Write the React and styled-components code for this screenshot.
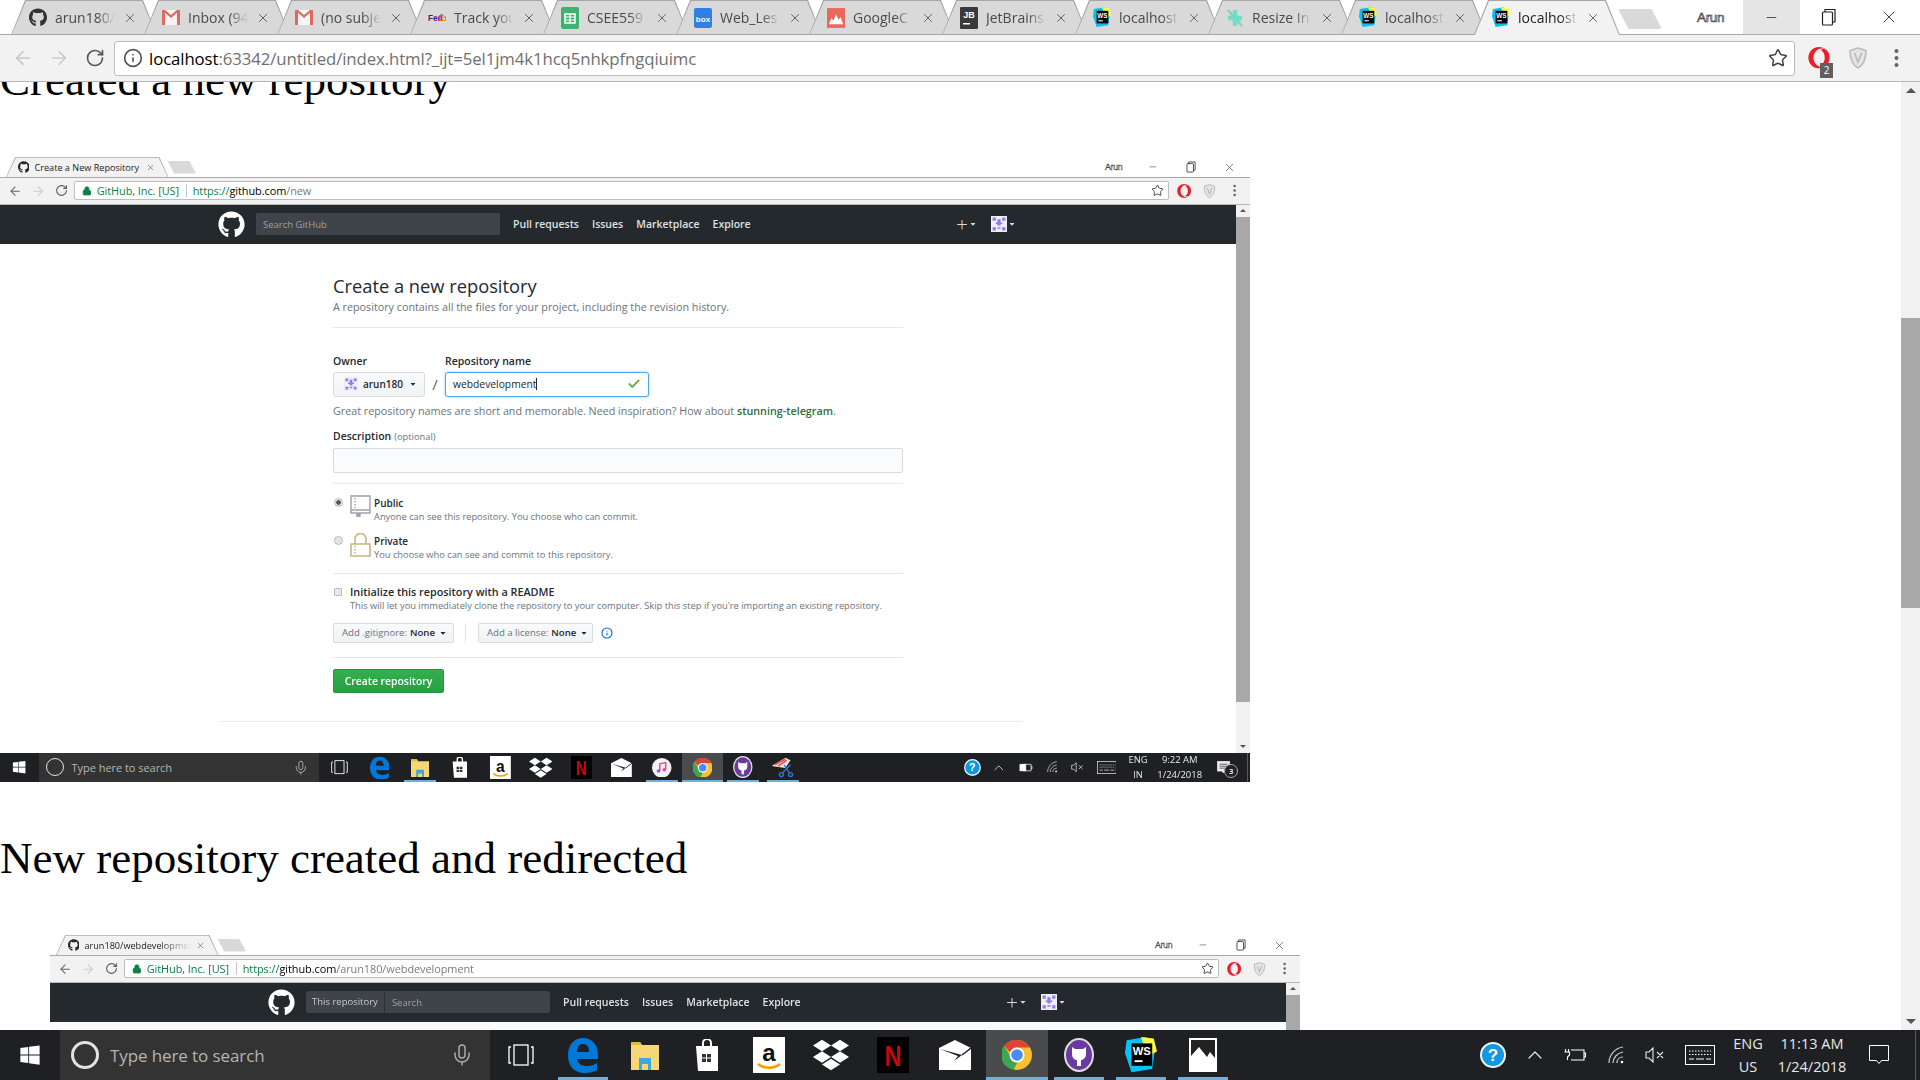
import React from 'react';
import styled, { createGlobalStyle } from 'styled-components';
import { ArrowLeft, ArrowRight, RotateCw, Star, Info, Check, X, Minus, ChevronUp, Mic, Lock } from 'lucide-react';
import { FaGithub, FaOpera, FaDropbox, FaWindows, FaCaretDown } from 'react-icons/fa';

const GlobalStyle = createGlobalStyle`
  html, body { margin: 0; padding: 0; background: #fff; overflow: hidden; }
  * { box-sizing: border-box; }
`;

const UI_FONT = `'Open Sans', 'Noto Sans', sans-serif`;

const Screen = styled.div`
  width: 1920px;
  height: 1080px;
  display: flex;
  flex-direction: column;
  overflow: hidden;
  font-family: ${UI_FONT};
`;

/* ---------- browser bar ---------- */

const BarWrap = styled.div`
  flex: none;
  zoom: ${(p) => p.$scale};
`;
const TabStrip = styled.div`
  height: ${(p) => p.$height}px;
  display: flex;
  align-items: flex-end;
  padding-left: ${(p) => p.$left}px;
  background: #fff;
  border-bottom: 1px solid #a9a9a9;
  position: relative;
`;
const TabBox = styled.div`
  position: relative;
  flex: none;
  width: ${(p) => p.$width}px;
  height: ${(p) => p.$height}px;
  margin-right: -13px;
  margin-bottom: -1px;
  padding: 0 20px 0 18px;
  display: flex;
  align-items: center;
  gap: 8px;
  z-index: ${(p) => (p.$active ? 3 : 1)};
  &::before {
    content: '';
    position: absolute;
    inset: 0;
    background: #a6a6a6;
    clip-path: polygon(0 100%, 14px 0, calc(100% - 14px) 0, 100% 100%);
  }
  &::after {
    content: '';
    position: absolute;
    inset: 1px 1px ${(p) => (p.$active ? 0 : 1)}px 1px;
    background: ${(p) => (p.$active ? '#f2f2f2' : '#d9d9d9')};
    clip-path: polygon(0 100%, 14px 0, calc(100% - 14px) 0, 100% 100%);
  }
  & > * {
    position: relative;
    z-index: 1;
  }
`;
const FavSlot = styled.span`
  flex: none;
  width: 18px;
  height: 18px;
  display: flex;
  align-items: center;
  justify-content: center;
`;
const TabTitle = styled.span`
  flex: 1;
  min-width: 0;
  overflow: hidden;
  white-space: nowrap;
  font-size: 14px;
  color: ${(p) => (p.$active ? '#222' : '#4a4a4a')};
  -webkit-mask-image: ${(p) => (p.$fade ? 'linear-gradient(90deg, #000 70%, transparent 100%)' : 'none')};
  mask-image: ${(p) => (p.$fade ? 'linear-gradient(90deg, #000 70%, transparent 100%)' : 'none')};
`;
const TabClose = styled(X)`
  flex: none;
  color: #5a5a5a;
`;
const NewTab = styled.div`
  flex: none;
  width: 44px;
  height: 20px;
  margin: 0 0 5px 11px;
  background: #d9d9d9;
  clip-path: polygon(0 0, 76% 0, 100% 100%, 24% 100%);
  border-radius: 3px;
`;
const WindowControls = styled.div`
  margin-left: auto;
  align-self: flex-start;
  height: ${(p) => p.$height}px;
  display: flex;
  align-items: center;
`;
const ProfileName = styled.span`
  font-family: 'Liberation Sans', sans-serif;
  font-size: 13.5px;
  letter-spacing: -0.4px;
  color: #fff;
  -webkit-text-stroke: 0.7px #444;
  margin-right: 19px;
`;
const WinButton = styled.div`
  width: ${(p) => p.$width}px;
  height: 100%;
  display: flex;
  align-items: center;
  justify-content: center;
  color: #222;
  background: ${(p) => (p.$hover ? '#e5e5e5' : 'transparent')};
`;
const Toolbar = styled.div`
  height: ${(p) => p.$height}px;
  display: flex;
  align-items: center;
  padding: 0 4px 0 5px;
  background: #f2f2f2;
  border-bottom: 1px solid #b7b7b7;
`;
const NavButton = styled.div`
  flex: none;
  width: 36px;
  display: flex;
  justify-content: center;
  color: ${(p) => p.$color};
`;
const AddressBar = styled.div`
  flex: 1;
  height: ${(p) => p.$height}px;
  margin-left: 1px;
  margin-right: 4px;
  padding: 0 6px 0 8px;
  display: flex;
  align-items: center;
  background: #fff;
  border: 1px solid #bcbcbc;
  border-radius: 3px;
  font-size: 16.8px;
  white-space: nowrap;
`;
const UrlPart = styled.span`
  color: ${(p) => p.$color};
  letter-spacing: -0.1px;
`;
const SecureName = styled.span`
  color: #0b8043;
  margin-left: 7px;
  letter-spacing: -0.1px;
`;
const UrlDivider = styled.span`
  width: 1px;
  height: 20px;
  background: #c5c5c5;
  margin: 0 10px;
`;
const LockGap = styled.span`
  display: flex;
  flex: none;
  margin-left: 3px;
  color: #0b8043;
`;
const StarSlot = styled.span`
  margin-left: auto;
  display: flex;
  color: #444;
`;
const ExtButton = styled.div`
  position: relative;
  flex: none;
  width: 39px;
  display: flex;
  justify-content: center;
`;
const ExtBadge = styled.span`
  position: absolute;
  right: 5px;
  bottom: -9px;
  width: 13px;
  height: 15px;
  background: #5f5f5f;
  color: #fff;
  font-size: 10px;
  line-height: 15px;
  text-align: center;
`;
const MenuDots = styled.svg`
  display: block;
`;
const InfoGap = styled.span`
  display: flex;
  flex: none;
  margin-right: 6px;
  color: #555;
`;

function Shield() {
  return (
    <svg width="20" height="22" viewBox="0 0 20 22">
      <path d="M10 1l8 2.500c0 8-2 14-8 17.500C4 17.500 2 11.500 2 3.500z" fill="#e4e4e4" stroke="#b9b9b9" strokeWidth="1.500" />
      <path d="M6.500 6L10 15l3.500-9" fill="none" stroke="#b9b9b9" strokeWidth="1.600" />
    </svg>
  );
}

function RestoreGlyph() {
  return (
    <svg width="16" height="18" viewBox="0 0 16 18" fill="none" stroke="#222" strokeWidth="1.200">
      <rect x="1.500" y="4" width="10" height="13" rx="1" />
      <path d="M4 4V1.500h10V14h-2.500" />
    </svg>
  );
}

function BrowserBar({ scale = 1, stripHeight, tabHeight, toolbarHeight, addressHeight, left, tabs, hoverMin, canBack, url, badge }) {
  return (
    <BarWrap $scale={scale}>
      <TabStrip $height={stripHeight} $left={left}>
        {tabs.map((t, i) => (
          <TabBox key={i} $width={t.width || 146} $height={tabHeight} $active={t.active}>
            <FavSlot>{t.icon}</FavSlot>
            <TabTitle $active={t.active} $fade={t.fade !== false}>{t.title}</TabTitle>
            <TabClose size={14} strokeWidth={1.6} />
          </TabBox>
        ))}
        <NewTab />
        <WindowControls $height={stripHeight - 1}>
          <ProfileName>Arun</ProfileName>
          <WinButton $width={57} $hover={hoverMin}><Minus size={15} strokeWidth={1.2} /></WinButton>
          <WinButton $width={58}><RestoreGlyph /></WinButton>
          <WinButton $width={62}><X size={20} strokeWidth={1} /></WinButton>
        </WindowControls>
      </TabStrip>
      <Toolbar $height={toolbarHeight}>
        <NavButton $color={canBack ? '#666' : '#c8c8c8'}><ArrowLeft size={22} strokeWidth={1.7} /></NavButton>
        <NavButton $color="#cbcbcb"><ArrowRight size={22} strokeWidth={1.7} /></NavButton>
        <NavButton $color="#5a5a5a"><RotateCw size={20} strokeWidth={2} /></NavButton>
        <AddressBar $height={addressHeight}>{url}<StarSlot><Star size={20} strokeWidth={1.8} /></StarSlot></AddressBar>
        <ExtButton>
          <FaOpera size={22} color="#e8202b" />
          {badge && <ExtBadge>{badge}</ExtBadge>}
        </ExtButton>
        <ExtButton><Shield /></ExtButton>
        <ExtButton>
          <MenuDots width="5" height="20" viewBox="0 0 5 20" fill="#666">
            <circle cx="2.500" cy="3" r="2" /><circle cx="2.500" cy="10" r="2" /><circle cx="2.500" cy="17" r="2" />
          </MenuDots>
        </ExtButton>
      </Toolbar>
    </BarWrap>
  );
}

const LocalUrl = (
  <>
    <InfoGap><Info size={20} strokeWidth={2} /></InfoGap>
    <UrlPart $color="#000">localhost</UrlPart>
    <UrlPart $color="#6f6f6f">:63342/untitled/index.html?_ijt=5el1jm4k1hcq5nhkpfngqiuimc</UrlPart>
  </>
);

function SecureUrl({ path }) {
  return (
    <>
      <LockGap><Lock size={15} fill="#0b8043" strokeWidth={2} /></LockGap>
      <SecureName>GitHub, Inc. [US]</SecureName>
      <UrlDivider />
      <UrlPart $color="#0b8043">https://</UrlPart>
      <UrlPart $color="#000">github.com</UrlPart>
      <UrlPart $color="#7a7a7a">{path}</UrlPart>
    </>
  );
}

/* ---------- favicons ---------- */

const Gmail = () => (
  <svg width="18" height="15" viewBox="0 0 18 15">
    <rect width="18" height="15" fill="#f4f4f4" />
    <path d="M0 0h3v15H0zM15 0h3v15h-3z" fill="#df6a5c" />
    <path d="M0 0h3l6 5 6-5h3L9 8z" fill="#df6a5c" />
  </svg>
);
const FedEx = () => (
  <svg width="22" height="12" viewBox="0 0 22 12">
    <text x="0" y="10" fontFamily="Liberation Sans" fontWeight="700" fontSize="10" fill="#4d148c">Fed</text>
    <text x="13" y="10" fontFamily="Liberation Sans" fontWeight="700" fontSize="10" fill="#ff6600">Ex</text>
  </svg>
);
const Sheets = () => (
  <svg width="18" height="22" viewBox="0 0 18 22">
    <rect width="18" height="22" rx="2" fill="#3cb371" />
    <path d="M4 7h10v9H4z" fill="none" stroke="#fff" strokeWidth="1.500" />
    <path d="M4 10h10M4 13h10M9 7v9" stroke="#fff" strokeWidth="1.200" />
  </svg>
);
const BoxIcon = () => (
  <svg width="20" height="22" viewBox="0 0 20 22">
    <rect width="20" height="22" rx="2" fill="#2f80e4" />
    <text x="10" y="15" textAnchor="middle" fontFamily="Liberation Sans" fontWeight="700" fontSize="9" fill="#fff">box</text>
  </svg>
);
const ChartsIcon = () => (
  <svg width="20" height="22" viewBox="0 0 20 22">
    <rect width="20" height="22" fill="#e8685c" />
    <path d="M2 18l3-7 2 3 3-7 3 6 2-3 3 8z" fill="#fff" />
  </svg>
);
const JBIcon = () => (
  <svg width="18" height="22" viewBox="0 0 18 22">
    <rect width="18" height="22" rx="1" fill="#3a3a3a" />
    <text x="9" y="11" textAnchor="middle" fontFamily="Liberation Sans" fontWeight="700" fontSize="9" fill="#fff">JB</text>
    <rect x="3" y="16" width="7" height="1.500" fill="#fff" />
  </svg>
);
const ResizeIcon = () => (
  <svg width="18" height="22" viewBox="0 0 18 22" fill="none" stroke="#74dcc6" strokeWidth="2.500">
    <path d="M2 10h6V3M8 10L2 3M16 12h-6v7M10 12l6 7M10 3v7h6M2 12h6v7" />
  </svg>
);
const WSIcon = ({ size = 22 }) => (
  <svg width={size} height={size * 1.1} viewBox="0 0 20 22">
    <path d="M1 2l12-2 6 6-2 14-13 2L0 10z" fill="#07c3f2" />
    <path d="M10 0l8 1 2 8-6 3z" fill="#fcf84a" />
    <rect x="4" y="4" width="13" height="14" fill="#000" />
    <text x="10.500" y="11.500" textAnchor="middle" fontFamily="Liberation Sans" fontWeight="700" fontSize="7" fill="#fff">WS</text>
    <rect x="6" y="14.500" width="5" height="1.200" fill="#fff" />
  </svg>
);

const mainTabs = [
  { title: 'arun180/', icon: <FaGithub size={19} color="#333" /> },
  { title: 'Inbox (94', icon: <Gmail /> },
  { title: '(no subje', icon: <Gmail /> },
  { title: 'Track you', icon: <FedEx /> },
  { title: 'CSEE559', icon: <Sheets /> },
  { title: 'Web_Les', icon: <BoxIcon /> },
  { title: 'GoogleC', icon: <ChartsIcon /> },
  { title: 'JetBrains', icon: <JBIcon /> },
  { title: 'localhost', icon: <WSIcon /> },
  { title: 'Resize In', icon: <ResizeIcon /> },
  { title: 'localhost', icon: <WSIcon /> },
  { title: 'localhost', icon: <WSIcon />, active: true },
];

/* ---------- taskbar ---------- */

const TaskbarWrap = styled.div`
  flex: none;
  height: ${(p) => p.$height}px;
  zoom: ${(p) => p.$scale};
  display: flex;
  align-items: stretch;
  background: #1e2023;
  color: #fff;
`;
const StartButton = styled.div`
  flex: none;
  width: 60px;
  display: flex;
  align-items: center;
  justify-content: center;
`;
const SearchBox = styled.div`
  flex: none;
  width: 430px;
  padding: 0 16px 0 11px;
  display: flex;
  align-items: center;
  gap: 11px;
  background: #333;
  color: #b4b4b4;
  font-size: 17px;
`;
const Cortana = styled.span`
  width: 28px;
  height: 28px;
  border: 3px solid #e2e2e2;
  border-radius: 50%;
`;
const SearchText = styled.span`
  flex: 1;
  letter-spacing: -0.1px;
`;
const TaskButton = styled.div`
  position: relative;
  flex: none;
  width: 62px;
  display: flex;
  align-items: center;
  justify-content: center;
  background: ${(p) => (p.$active ? '#4a4b4d' : 'transparent')};
  &::after {
    content: '';
    display: ${(p) => (p.$running ? 'block' : 'none')};
    position: absolute;
    left: ${(p) => (p.$active ? 0 : 6)}px;
    right: ${(p) => (p.$active ? 0 : 6)}px;
    bottom: 0;
    height: 3px;
    background: #6cb0e0;
  }
`;
const Tray = styled.div`
  margin-left: auto;
  display: flex;
  align-items: stretch;
`;
const TraySlot = styled.div`
  flex: none;
  position: relative;
  width: ${(p) => p.$width}px;
  display: flex;
  flex-direction: column;
  align-items: center;
  justify-content: center;
  gap: 3px;
  font-size: 14.5px;
  line-height: 20px;
  color: #e8e8e8;
`;
const ShowDesktop = styled.div`
  flex: none;
  width: 16px;
  display: flex;
  justify-content: flex-end;
  padding-right: 4px;
  &::after {
    content: '';
    width: 1px;
    background: #5a5a5a;
  }
`;
const NoteBadge = styled.span`
  position: absolute;
  right: 2px;
  bottom: 6px;
  width: 22px;
  height: 22px;
  border-radius: 50%;
  border: 1px solid #aaa;
  background: #222;
  font-size: 12px;
  line-height: 20px;
  text-align: center;
  font-weight: 700;
`;

const TaskView = () => (
  <svg width="26" height="22" viewBox="0 0 26 22" fill="none" stroke="#fff" strokeWidth="1.300">
    <rect x="6" y="1" width="14" height="20" />
    <path d="M3 3H1v16h2M23 3h2v16h-2" />
  </svg>
);
const EdgeLogo = () => (
  <svg width="30" height="36" viewBox="0 0 30 36">
    <path
      fillRule="evenodd"
      fill="#0078d7"
      d="M0 18C0 8 6 1 15 1c9 0 15 7 15 16v5H9c1 5 5 7 10 7 4 0 7-1 10-3v7c-3 2-7 3-12 3C6 36 0 29 0 18zM9 15h12c0-5-2-8-6-8s-6 3-6 8z"
    />
  </svg>
);
const Explorer = () => (
  <svg width="28" height="30" viewBox="0 0 28 30">
    <path d="M0 2h9l2 3h17v25H0z" fill="#f6d776" />
    <path d="M0 2h9l2 3H0z" fill="#e5b84a" />
    <path d="M8 18h12v12H8z" fill="#3ea8e0" />
    <path d="M11 24h6v6h-6z" fill="#f6d776" />
  </svg>
);
const StoreBag = () => (
  <svg width="24" height="32" viewBox="0 0 24 32">
    <path d="M8 8V4a4 4 0 0 1 8 0v4" fill="none" stroke="#fff" strokeWidth="2" />
    <path d="M1 7h22v25H3z" fill="#fff" />
    <path d="M7 15h4v3.500H7zM12 15h4v3.500h-4zM7 19.500h4v3.500H7zM12 19.500h4v3.500h-4z" fill="#333" />
  </svg>
);
const Amazon = () => (
  <svg width="32" height="36" viewBox="0 0 32 36">
    <rect width="32" height="36" fill="#fff" />
    <text x="16" y="24" textAnchor="middle" fontFamily="Liberation Sans" fontWeight="700" fontSize="24" fill="#111">a</text>
    <path d="M5 27c6 5 16 5 22 0" fill="none" stroke="#f90" strokeWidth="2.500" />
  </svg>
);
const Netflix = () => (
  <svg width="32" height="36" viewBox="0 0 32 36">
    <rect width="32" height="36" fill="#000" />
    <text x="16" y="29" textAnchor="middle" fontFamily="Liberation Sans" fontWeight="700" fontSize="30" fill="#c8060e" transform="translate(3.500 0) scale(0.78 1)">N</text>
  </svg>
);
const Mail = () => (
  <svg width="32" height="30" viewBox="0 0 32 30">
    <path d="M16 0l16 8v22H0V8z" fill="#fff" />
    <path d="M1 9l22 6-8 6 4-5z" fill="#222" />
    <path d="M23 15l9-7" stroke="#222" strokeWidth="1.500" />
  </svg>
);
const Photos = () => (
  <svg width="28" height="34" viewBox="0 0 28 34">
    <rect width="28" height="34" fill="#fff" />
    <rect x="2" y="2" width="24" height="24" fill="#222" />
    <path d="M2 26V18l8-9 8 10 3-5 5 6v6z" fill="#fff" />
  </svg>
);
const ChromeLogo = () => (
  <svg width="30" height="30" viewBox="0 0 30 30">
    <circle cx="15" cy="15" r="15" fill="#fbc02d" />
    <path d="M15 0a15 15 0 0 1 13 7.500H15a7.500 7.500 0 0 0-7 5L2 5.500A15 15 0 0 1 15 0z" fill="#db4437" />
    <path d="M2 5.500l6.500 11a7.500 7.500 0 0 0 7 6L11.500 29.500A15 15 0 0 1 2 5.500z" fill="#3aa757" />
    <circle cx="15" cy="15" r="7.500" fill="#fff" />
    <circle cx="15" cy="15" r="5.800" fill="#4a8af4" />
  </svg>
);
const GhDesktop = () => (
  <svg width="30" height="34" viewBox="0 0 30 34">
    <ellipse cx="15" cy="17" rx="15" ry="17" fill="#ddd" />
    <ellipse cx="15" cy="17" rx="13" ry="15" fill="#6b3a9e" />
    <path d="M8 9l3 2h8l3-2v7c0 4-3 6-5 6v6h-4v-6c-2 0-5-2-5-6z" fill="#fff" />
  </svg>
);
const ITunes = () => (
  <svg width="30" height="30" viewBox="0 0 30 30">
    <circle cx="15" cy="15" r="15" fill="#f5f0f5" />
    <path d="M12 20V9l9-2v11" fill="none" stroke="#d94f8c" strokeWidth="2.200" />
    <circle cx="10" cy="20" r="2.800" fill="#8e5bd0" /><circle cx="19" cy="18" r="2.800" fill="#e4527c" />
  </svg>
);
const Snip = () => (
  <svg width="36" height="32" viewBox="0 0 36 32">
    <path d="M1 14L22 1l8 4-8 12z" fill="#f3e6e2" />
    <path d="M6 12L22 3M11 14l13-9" stroke="#d8584e" strokeWidth="2.500" />
    <path d="M20 12l8 12M30 12L18 24" stroke="#2a7fd0" strokeWidth="2" />
    <circle cx="16" cy="27" r="3" fill="none" stroke="#2a7fd0" strokeWidth="2" />
    <circle cx="30" cy="27" r="3" fill="none" stroke="#2a7fd0" strokeWidth="2" />
  </svg>
);

const HelpIcon = () => (
  <svg width="26" height="26" viewBox="0 0 26 26">
    <circle cx="13" cy="13" r="12" fill="#0f9ae0" stroke="#f2f2f2" strokeWidth="2" />
    <text x="13" y="19" textAnchor="middle" fontFamily="Liberation Sans" fontWeight="700" fontSize="17" fill="#fff">?</text>
  </svg>
);
const Battery = ({ plug }) => (
  <svg width="22" height="14" viewBox="0 0 22 14" fill="none" stroke="#fff" strokeWidth="1.100">
    <path d="M7 2h13v10H7M20 5h1.500v4H20" />
    {plug ? <path d="M1.500 1v3M4.500 1v3M0.500 4h5v3l-2 2v3" /> : <rect x="3" y="2" width="9" height="10" fill="#fff" />}
  </svg>
);
const Wifi = () => (
  <svg width="16" height="18" viewBox="0 0 16 18" fill="none" stroke="#cfcfcf" strokeWidth="1.200">
    <path d="M1 17C1 9 7 2 15 1M5 17c0-5 4-10 10-11M9 17c0-3 2-6 6-6" />
    <circle cx="14" cy="16" r="1.300" fill="#fff" stroke="none" />
  </svg>
);
const Muted = () => (
  <svg width="20" height="16" viewBox="0 0 20 16" fill="none" stroke="#e8e8e8" strokeWidth="1.100">
    <path d="M1 5h3l4-4v14l-4-4H1zM12 5l6 6M18 5l-6 6" />
  </svg>
);
const Keyboard = () => (
  <svg width="30" height="20" viewBox="0 0 30 20" fill="none" stroke="#fff" strokeWidth="1">
    <rect x="0.500" y="0.500" width="29" height="19" />
    <path d="M4 6h22M4 9.500h22" strokeDasharray="1.500 1.500" />
    <path d="M4 14h5M11 14h8M21 14h5" />
  </svg>
);
const Bubble = ({ filled }) => (
  <svg width="20" height="20" viewBox="0 0 20 20" fill={filled ? '#e8e8e8' : 'none'} stroke="#fff" strokeWidth="1">
    <path d="M0.500 0.500h19v15h-7l-2.500 3-2.500-3h-7z" />
    {filled && <path d="M4 5h12M4 8h12M4 11h9" stroke="#222" />}
  </svg>
);

const TASK_ICONS = {
  view: <TaskView />,
  edge: <EdgeLogo />,
  explorer: <Explorer />,
  store: <StoreBag />,
  amazon: <Amazon />,
  dropbox: <FaDropbox size={36} color="#fff" />,
  netflix: <Netflix />,
  mail: <Mail />,
  itunes: <ITunes />,
  chrome: <ChromeLogo />,
  github: <GhDesktop />,
  webstorm: <WSIcon size={32} />,
  photos: <Photos />,
  snip: <Snip />,
};

function Taskbar({ scale = 1, height, apps, lang, time, date, plug, note }) {
  return (
    <TaskbarWrap $height={height} $scale={scale}>
      <StartButton><FaWindows size={22} /></StartButton>
      <SearchBox>
        <Cortana />
        <SearchText>Type here to search</SearchText>
        <Mic size={24} color="#aaa" strokeWidth={1.5} />
      </SearchBox>
      {apps.map((a) => (
        <TaskButton key={a.id} $running={a.running} $active={a.active}>{TASK_ICONS[a.id]}</TaskButton>
      ))}
      <Tray>
        <TraySlot $width={42}><HelpIcon /></TraySlot>
        <TraySlot $width={41}><ChevronUp size={24} strokeWidth={1.2} /></TraySlot>
        <TraySlot $width={40}><Battery plug={plug} /></TraySlot>
        <TraySlot $width={41}><Wifi /></TraySlot>
        <TraySlot $width={37}><Muted /></TraySlot>
        <TraySlot $width={53}><Keyboard /></TraySlot>
        <TraySlot $width={44}><span>ENG</span><span>{lang}</span></TraySlot>
        <TraySlot $width={84}><span>{time}</span><span>{date}</span></TraySlot>
        <TraySlot $width={50}>
          <Bubble filled={!!note} />
          {note && <NoteBadge>{note}</NoteBadge>}
        </TraySlot>
        <ShowDesktop />
      </Tray>
    </TaskbarWrap>
  );
}

/* ---------- page, scrollbars ---------- */

const Viewport = styled.div`
  flex: 1;
  min-height: 0;
  display: flex;
`;
const PageArea = styled.div`
  flex: 1;
  min-width: 0;
  overflow: hidden;
  background: #fff;
`;
const Heading = styled.h1`
  margin: ${(p) => p.$top}px 0 0;
  height: 54px;
  font-family: 'Liberation Serif', serif;
  font-size: 45px;
  line-height: 54px;
  font-weight: 400;
  color: #000;
  white-space: nowrap;
`;
const ScrollTrack = styled.div`
  flex: none;
  width: ${(p) => p.$width}px;
  display: flex;
  flex-direction: column;
  align-items: center;
  background: #f1f1f1;
`;
const ScrollArrow = styled.div`
  flex: none;
  height: ${(p) => p.$box}px;
  display: flex;
  align-items: center;
  justify-content: center;
  margin-top: ${(p) => (p.$down ? 'auto' : 0)};
  &::before {
    content: '';
    border-left: ${(p) => p.$size}px solid transparent;
    border-right: ${(p) => p.$size}px solid transparent;
    border-${(p) => (p.$down ? 'top' : 'bottom')}: ${(p) => p.$size}px solid #555;
  }
`;
const ScrollThumb = styled.div`
  flex: none;
  width: 100%;
  height: ${(p) => p.$height}px;
  margin-top: ${(p) => p.$top}px;
  background: #a8a8a8;
`;

/* ---------- embedded screenshot ---------- */

const Shot = styled.div`
  width: 1250px;
  height: ${(p) => p.$height}px;
  margin: ${(p) => p.$top}px 0 0 ${(p) => p.$left}px;
  display: flex;
  flex-direction: column;
  overflow: hidden;
  filter: blur(0.45px);
`;
const ShotBody = styled.div`
  flex: 1;
  min-height: 0;
  display: flex;
`;
const GhPage = styled.div`
  flex: 1;
  min-width: 0;
  background: ${(p) => p.$bg};
  font-family: ${UI_FONT};
  color: #24292e;
`;
const GhHeader = styled.div`
  height: 39px;
  display: flex;
  align-items: center;
  padding: 0 220px 0 218px;
  background: #24292e;
  color: #fff;
`;
const HeaderSearch = styled.div`
  width: 244px;
  height: 22px;
  margin-left: 11px;
  display: flex;
  align-items: center;
  background: #3f4448;
  border-radius: 2px;
  font-size: 9.5px;
  color: #9da1a4;
`;
const ScopeLabel = styled.span`
  padding: 0 6px 0 6px;
  line-height: 22px;
  color: #c6c8ca;
  border-right: 1px solid #2b3035;
`;
const SearchHint = styled.span`
  padding-left: 7px;
`;
const HeaderNav = styled.nav`
  margin-left: 13px;
  display: flex;
  gap: 13px;
`;
const NavLink = styled.span`
  font-size: 10.5px;
  font-weight: 600;
  color: #dfe0e1;
`;
const HeaderRight = styled.div`
  margin-left: auto;
  display: flex;
  align-items: center;
  color: #d9dadb;
  font-size: 21px;
  line-height: 21px;
  font-weight: 300;
`;
const Caret = styled(FaCaretDown)`
  font-size: ${(p) => p.$size || 9}px;
  margin-left: 1px;
  color: ${(p) => p.$color || 'inherit'};
`;
const AvatarGap = styled.span`
  width: 14px;
`;
const Form = styled.div`
  width: 570px;
  margin: 32px 0 0 333px;
`;
const FormTitle = styled.div`
  font-size: 18.3px;
  line-height: 20px;
`;
const Note = styled.div`
  font-size: ${(p) => p.$size || 10.75}px;
  line-height: ${(p) => p.$line || 14}px;
  color: #6a737d;
  margin-top: ${(p) => p.$top || 0}px;
  white-space: nowrap;
`;
const Rule = styled.div`
  height: 1px;
  background: #e6e8ea;
  margin-top: ${(p) => p.$top}px;
`;
const OwnerRow = styled.div`
  margin-top: 26px;
  display: flex;
`;
const FieldCol = styled.div`
  display: flex;
  flex-direction: column;
  gap: 4px;
`;
const FieldLabel = styled.div`
  font-size: 10.5px;
  line-height: 14px;
  font-weight: 600;
  white-space: nowrap;
  margin-top: ${(p) => p.$top || 0}px;
`;
const OwnerButton = styled.div`
  width: 92px;
  height: 25px;
  display: flex;
  align-items: center;
  padding-left: 10px;
  gap: 5px;
  background: linear-gradient(#f9fafb, #eff3f6);
  border: 1px solid #d8dbde;
  border-radius: 3px;
  font-size: 10px;
  font-weight: 600;
`;
const Slash = styled.span`
  width: 20px;
  align-self: flex-end;
  height: 25px;
  line-height: 25px;
  text-align: center;
  font-size: 15px;
  color: #586069;
`;
const NameField = styled.div`
  width: 204px;
  height: 25px;
  display: flex;
  align-items: center;
  padding: 0 7px;
  background: #fff;
  border: 1.5px solid #51a7e8;
  border-radius: 3px;
  box-shadow: 0 0 3px rgba(81, 167, 232, 0.6);
  font-size: 10.3px;
`;
const TextCaret = styled.span`
  width: 1px;
  height: 12px;
  background: #24292e;
`;
const CheckSlot = styled.span`
  margin-left: auto;
  display: flex;
  color: #55a532;
`;
const Suggestion = styled.span`
  color: #2c6e3a;
  font-weight: 600;
`;
const Optional = styled.span`
  font-weight: 400;
  font-size: 9.3px;
  color: #6a737d;
  margin-left: 3px;
`;
const DescField = styled.div`
  height: 25px;
  margin-top: 4px;
  background: #fafbfc;
  border: 1px solid #d8dbde;
  border-radius: 2px;
`;
const OptionRow = styled.div`
  display: flex;
  margin-top: ${(p) => p.$top}px;
`;
const ControlCol = styled.div`
  flex: none;
  width: 17px;
  height: 14px;
  display: flex;
  align-items: center;
  padding-left: 1px;
`;
const Radio = styled.span`
  width: 9px;
  height: 9px;
  border-radius: 50%;
  border: 1px solid #bbb;
  background: ${(p) => (p.$on ? 'radial-gradient(circle, #555 0 2px, #e4e4e4 2.5px)' : '#e4e4e4')};
`;
const CheckBox = styled.span`
  width: 8px;
  height: 8px;
  border: 1px solid #bbb;
  border-radius: 1px;
  background: #e8e8e8;
`;
const OptionIcon = styled.div`
  flex: none;
  width: 24px;
  margin-top: -1px;
`;
const OptionText = styled.div`
  min-width: 0;
`;
const OptionTitle = styled.div`
  font-size: ${(p) => p.$size || 10}px;
  line-height: 14px;
  font-weight: 600;
  white-space: nowrap;
`;
const SelectRow = styled.div`
  margin-top: 11px;
  display: flex;
  align-items: center;
`;
const SelectButton = styled.div`
  width: ${(p) => p.$width}px;
  height: 20px;
  padding-left: 8px;
  display: flex;
  align-items: center;
  gap: 3px;
  background: linear-gradient(#f9fafb, #eff3f6);
  border: 1px solid #d8dbde;
  border-radius: 2px;
  font-size: 9.6px;
  color: #6a737d;
  white-space: nowrap;
`;
const SelectValue = styled.b`
  font-weight: 600;
  color: #24292e;
`;
const SelectDivider = styled.span`
  width: 1px;
  height: 20px;
  margin: 0 12px 0 11px;
  background: #e1e4e8;
`;
const InfoSlot = styled.span`
  margin-left: 8px;
  display: flex;
  color: #0366d6;
`;
const CreateButton = styled.div`
  width: 111px;
  height: 24px;
  margin-top: 11px;
  display: flex;
  align-items: center;
  justify-content: center;
  background: linear-gradient(#34b04f, #269f42);
  border: 1px solid #22963c;
  border-radius: 2px;
  color: #fff;
  font-size: 10.4px;
  font-weight: 600;
`;
const FooterRule = styled.div`
  width: 802px;
  height: 1px;
  margin: 28px 0 0 -113px;
  background: #eaecef;
`;

const Identicon = ({ size }) => (
  <svg width={size} height={size} viewBox="0 0 10 10">
    <rect width="10" height="10" fill="#f0edf8" />
    <path d="M1 1h2v2H1zM7 1h2v2H7zM4 2h2v4H4zM3 4h4v1H3zM1 7h2v2H1zM7 7h2v2H7zM4 7h2v1H4z" fill="#8f7ee0" />
  </svg>
);
const BookIcon = () => (
  <svg width="21" height="22" viewBox="0 0 21 22" fill="none" stroke="#9aa3ab" strokeWidth="1.400">
    <path d="M1 1h19v17H1zM1 18v-17M1 15h19" />
    <path d="M5 3v10" strokeDasharray="1.500 1.500" />
    <path d="M7 18v4l1.500-1.500L10 22v-4" fill="#9aa3ab" />
  </svg>
);
const LockIcon = () => (
  <svg width="21" height="24" viewBox="0 0 21 24" fill="none" stroke="#c7b781" strokeWidth="1.600">
    <path d="M1 11h19v12H1zM5 11V6a5.500 5.500 0 0 1 11 0v5" />
    <path d="M5 13v8" strokeDasharray="1.500 1.500" />
  </svg>
);

function GithubHeader({ scoped, search }) {
  return (
    <GhHeader>
      <FaGithub size={27} />
      <HeaderSearch>
        {scoped && <ScopeLabel>This repository</ScopeLabel>}
        <SearchHint>{search}</SearchHint>
      </HeaderSearch>
      <HeaderNav>
        <NavLink>Pull requests</NavLink>
        <NavLink>Issues</NavLink>
        <NavLink>Marketplace</NavLink>
        <NavLink>Explore</NavLink>
      </HeaderNav>
      <HeaderRight>
        +<Caret $size={8} />
        <AvatarGap />
        <Identicon size={16} />
        <Caret $size={8} />
      </HeaderRight>
    </GhHeader>
  );
}

function NewRepoForm() {
  return (
    <Form>
      <FormTitle>Create a new repository</FormTitle>
      <Note $top={4}>A repository contains all the files for your project, including the revision history.</Note>
      <Rule $top={13} />
      <OwnerRow>
        <FieldCol>
          <FieldLabel>Owner</FieldLabel>
          <OwnerButton><Identicon size={14} /> arun180 <Caret $size={8} /></OwnerButton>
        </FieldCol>
        <Slash>/</Slash>
        <FieldCol>
          <FieldLabel>Repository name</FieldLabel>
          <NameField>
            webdevelopment<TextCaret />
            <CheckSlot><Check size={14} strokeWidth={3} /></CheckSlot>
          </NameField>
        </FieldCol>
      </OwnerRow>
      <Note $top={7}>
        Great repository names are short and memorable. Need inspiration? How about <Suggestion>stunning-telegram</Suggestion>.
      </Note>
      <FieldLabel $top={11}>
        Description<Optional>(optional)</Optional>
      </FieldLabel>
      <DescField />
      <Rule $top={10} />
      <OptionRow $top={12}>
        <ControlCol><Radio $on /></ControlCol>
        <OptionIcon><BookIcon /></OptionIcon>
        <OptionText>
          <OptionTitle>Public</OptionTitle>
          <Note $size={9.3} $line={12} $top={1}>Anyone can see this repository. You choose who can commit.</Note>
        </OptionText>
      </OptionRow>
      <OptionRow $top={11}>
        <ControlCol><Radio /></ControlCol>
        <OptionIcon><LockIcon /></OptionIcon>
        <OptionText>
          <OptionTitle>Private</OptionTitle>
          <Note $size={9.3} $line={12} $top={1}>You choose who can see and commit to this repository.</Note>
        </OptionText>
      </OptionRow>
      <Rule $top={11} />
      <OptionRow $top={11}>
        <ControlCol><CheckBox /></ControlCol>
        <OptionText>
          <OptionTitle $size={10.8}>Initialize this repository with a README</OptionTitle>
          <Note $size={9.3} $line={12} $top={1}>This will let you immediately clone the repository to your computer. Skip this step if you're importing an existing repository.</Note>
        </OptionText>
      </OptionRow>
      <SelectRow>
        <SelectButton $width={121}>Add .gitignore: <SelectValue>None</SelectValue><Caret $size={8} $color="#24292e" /></SelectButton>
        <SelectDivider />
        <SelectButton $width={115}>Add a license: <SelectValue>None</SelectValue><Caret $size={8} $color="#24292e" /></SelectButton>
        <InfoSlot><Info size={12} strokeWidth={2.2} /></InfoSlot>
      </SelectRow>
      <Rule $top={14} />
      <CreateButton>Create repository</CreateButton>
      <FooterRule />
    </Form>
  );
}

const SHOT_SCALE = 1250 / 1920;

const desktopApps = [
  { id: 'view' },
  { id: 'edge' },
  { id: 'explorer', running: true },
  { id: 'store' },
  { id: 'amazon' },
  { id: 'dropbox' },
  { id: 'netflix' },
  { id: 'mail' },
  { id: 'itunes', running: true },
  { id: 'chrome', running: true, active: true },
  { id: 'github', running: true },
  { id: 'snip', running: true },
];
const mainApps = [
  { id: 'view' },
  { id: 'edge', running: true },
  { id: 'explorer' },
  { id: 'store' },
  { id: 'amazon' },
  { id: 'dropbox' },
  { id: 'netflix' },
  { id: 'mail' },
  { id: 'chrome', running: true, active: true },
  { id: 'github', running: true },
  { id: 'webstorm', running: true },
  { id: 'photos', running: true },
];

const shotBar = {
  scale: SHOT_SCALE,
  stripHeight: 32,
  tabHeight: 31,
  toolbarHeight: 41,
  addressHeight: 30,
  left: 9,
  canBack: true,
};

export default function App() {
  return (
    <Screen>
      <GlobalStyle />
      <BrowserBar
        stripHeight={35}
        tabHeight={35}
        toolbarHeight={47}
        addressHeight={35}
        left={11}
        tabs={mainTabs}
        hoverMin
        url={LocalUrl}
        badge="2"
      />
      <Viewport>
        <PageArea>
          <Heading $top={-29}>Created a new repository</Heading>
          <Shot $height={625} $left={0} $top={50}>
            <BrowserBar
              {...shotBar}
              tabs={[{ title: 'Create a New Repository', icon: <FaGithub size={19} color="#24292e" />, width: 250, active: true, fade: false }]}
              url={<SecureUrl path="/new" />}
            />
            <ShotBody>
              <GhPage $bg="#fff">
                <GithubHeader search="Search GitHub" />
                <NewRepoForm />
              </GhPage>
              <ScrollTrack $width={14}>
                <ScrollArrow $box={12} $size={3} />
                <ScrollThumb $top={0} $height={485} />
                <ScrollArrow $box={12} $size={3} $down />
              </ScrollTrack>
            </ShotBody>
            <Taskbar scale={SHOT_SCALE} height={45} apps={desktopApps} lang="IN" time="9:22 AM" date="1/24/2018" note="3" />
          </Shot>
          <Heading $top={49}>New repository created and redirected</Heading>
          <Shot $height={200} $left={50} $top={50}>
            <BrowserBar
              {...shotBar}
              tabs={[{ title: 'arun180/webdevelopment', icon: <FaGithub size={19} color="#24292e" />, width: 250, active: true }]}
              url={<SecureUrl path="/arun180/webdevelopment" />}
            />
            <ShotBody>
              <GhPage $bg="#fafbfc">
                <GithubHeader scoped search="Search" />
              </GhPage>
              <ScrollTrack $width={14}>
                <ScrollArrow $box={12} $size={3} />
                <ScrollThumb $top={0} $height={140} />
              </ScrollTrack>
            </ShotBody>
          </Shot>
        </PageArea>
        <ScrollTrack $width={19}>
          <ScrollArrow $box={17} $size={5} />
          <ScrollThumb $top={219} $height={290} />
          <ScrollArrow $box={17} $size={5} $down />
        </ScrollTrack>
      </Viewport>
      <Taskbar height={50} apps={mainApps} lang="US" time="11:13 AM" date="1/24/2018" plug />
    </Screen>
  );
}
